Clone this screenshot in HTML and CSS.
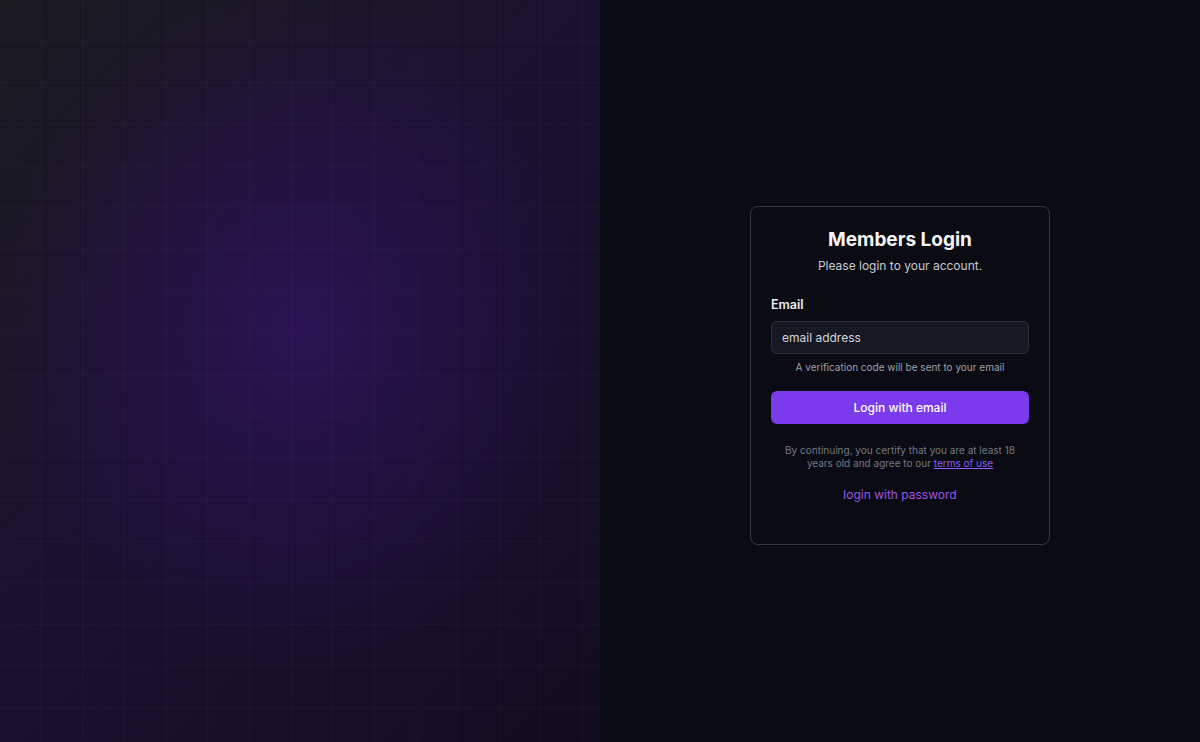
FILE: index.html
```html
<!DOCTYPE html>
<html>
<head>
    <title>Members Login</title>
    <link rel="stylesheet" href="styles.css">
</head>
<body>
    <div class="page">
        <div class="art-panel">
            <div class="glow"></div>
            <div class="grid"></div>
        </div>

        <div class="login-panel">
            <div class="card">
                <h1 class="card-title">Members Login</h1>
                <p class="card-subtitle">Please login to your account.</p>

                <form id="login-form">
                    <label class="field-label" for="email">Email</label>
                    <input class="field-input" type="email" id="email" name="email" placeholder="email address">
                    <p class="field-hint">A verification code will be sent to your email</p>

                    <button class="submit-button" type="submit">Login with email</button>
                </form>

                <p class="legal">
                    By continuing, you certify that you are at least 18<br>
                    years old and agree to our <a href="#">terms of use</a>
                </p>

                <a class="alt-link" href="#">login with password</a>
            </div>
        </div>
    </div>
</body>
</html>
```

FILE: styles.css
```css
body {
    font-family: Inter, "Liberation Sans", Arial, sans-serif;
    margin: 0;
    padding: 0;
    background-color: #0b0c13;
}

.page {
    display: flex;
    height: 100vh;
}

/* Left side: purple glow with a faint grid on top */
.art-panel {
    position: relative;
    width: 50%;
    overflow: hidden;
    background: linear-gradient(135deg, #1b1a1f 0%, #1a1230 45%, #120c22 100%);
}

.glow {
    position: absolute;
    inset: 0;
    background: radial-gradient(ellipse 300px 340px at 300px 330px, rgba(46, 20, 88, 0.9) 0%, rgba(40, 18, 80, 0.55) 45%, rgba(30, 14, 60, 0) 100%);
}

.grid {
    position: absolute;
    inset: 0;
    background-image:
        linear-gradient(to right, rgba(255, 255, 255, 0.022) 1px, transparent 1px),
        linear-gradient(to bottom, rgba(255, 255, 255, 0.022) 1px, transparent 1px);
    background-size: 41.667px 41.667px;
    background-position: -1px -1px;
}

/* Right side */
.login-panel {
    width: 50%;
    display: flex;
    align-items: center;
    justify-content: center;
    background-color: #0b0c13;
}

.card {
    width: 258px;
    padding: 20px 20px 40px;
    margin-top: 9px;
    border: 1px solid #33353f;
    border-radius: 8px;
    background-color: #0b0c13;
    text-align: center;
}

.card-title {
    margin: 0;
    font-size: 19px;
    line-height: 26px;
    font-weight: 700;
    color: #f5f5f7;
}

.card-subtitle {
    margin: 3px 0 0;
    font-size: 12px;
    line-height: 20px;
    color: #c8cbd2;
}

#login-form {
    text-align: left;
    margin-top: 19px;
}

.field-label {
    display: block;
    font-size: 12.5px;
    line-height: 20px;
    font-weight: 600;
    color: #eceef2;
}

.field-input {
    display: block;
    box-sizing: border-box;
    width: 100%;
    height: 33px;
    margin-top: 6px;
    padding: 0 10px;
    border: 1px solid #2d3039;
    border-radius: 6px;
    background-color: #171922;
    font-family: inherit;
    font-size: 12px;
    color: #e5e7eb;
}

.field-input::placeholder {
    color: #d2d5db;
}

.field-hint {
    margin: 5px 0 0;
    font-size: 10px;
    line-height: 16px;
    color: #9ca0a9;
    text-align: center;
}

.submit-button {
    display: block;
    width: 100%;
    height: 33px;
    margin-top: 16px;
    border: none;
    border-radius: 6px;
    background-color: #7c3aed;
    font-family: inherit;
    font-size: 12px;
    font-weight: 500;
    color: #ffffff;
    cursor: pointer;
}

.legal {
    margin: 20px 0 0;
    font-size: 10px;
    line-height: 13px;
    color: #737784;
}

.legal a {
    color: #8b5cf6;
}

.alt-link {
    display: inline-block;
    margin-top: 16px;
    font-size: 12px;
    line-height: 18px;
    color: #9d55e8;
    text-decoration: none;
}
```
